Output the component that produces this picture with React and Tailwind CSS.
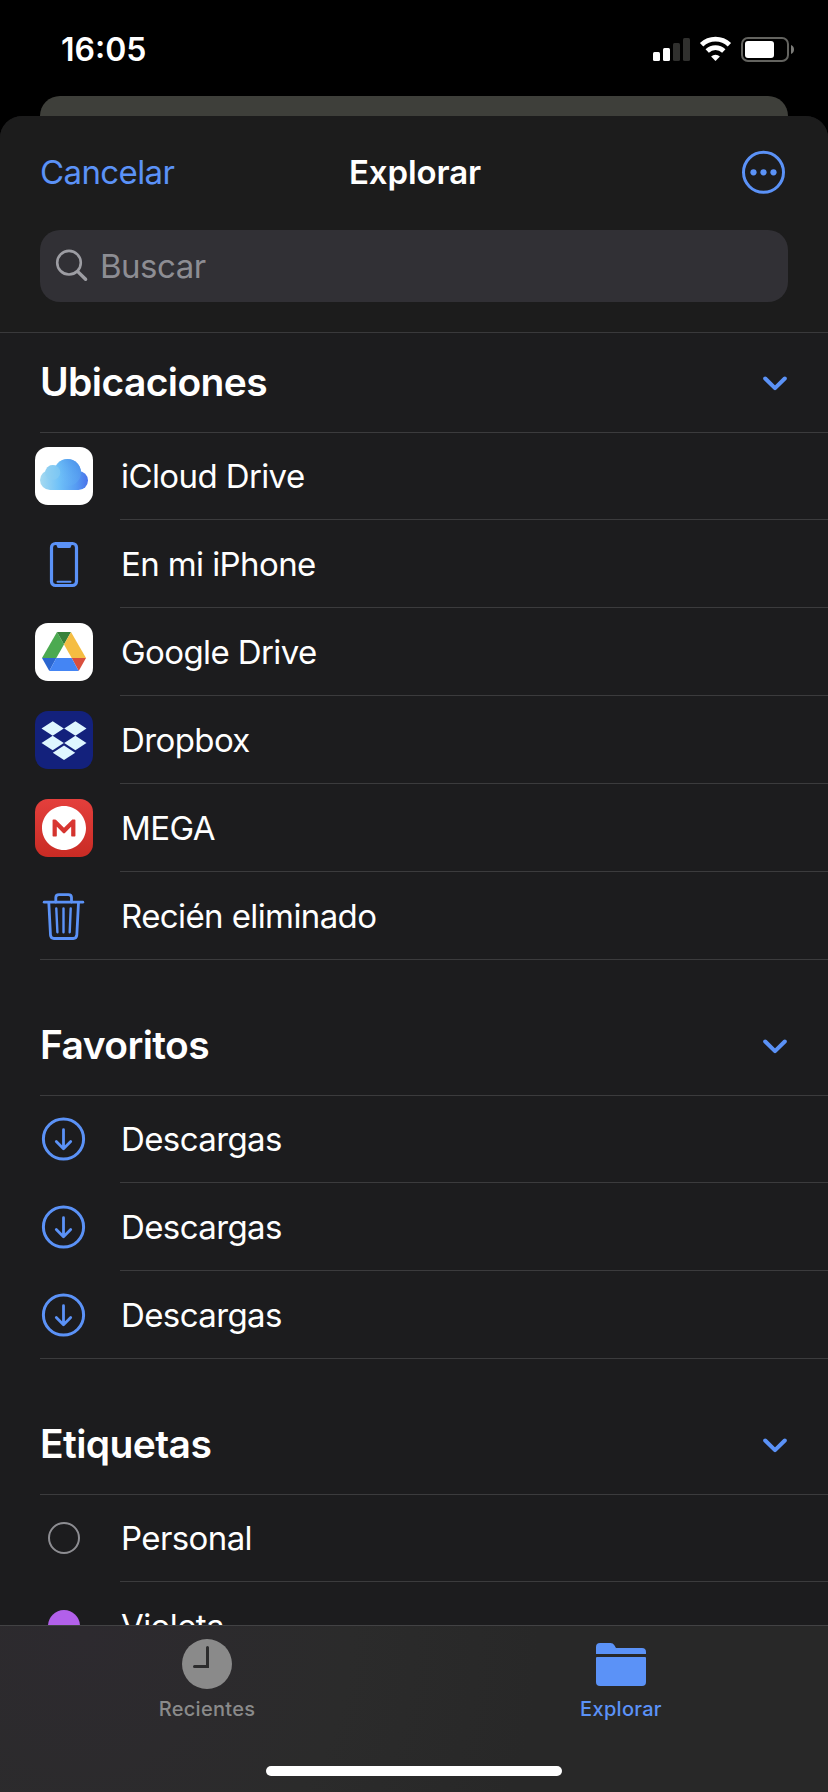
import { SiMega } from "react-icons/si";

function StatusBar() {
  return (
    <div className="flex h-24 shrink-0 items-start justify-between pt-[29px] pr-[33px] pl-[61px]">
      <p className="pt-px text-[32px] leading-10 font-semibold text-white">
        16:05
      </p>
      <div className="flex items-start gap-[9px] pt-[7px]">
        <svg width="37" height="26" viewBox="0 0 37 26">
          <rect x="0" y="16" width="7" height="9" rx="1.5" fill="#fff" />
          <rect x="10" y="12" width="7" height="13" rx="1.5" fill="#fff" />
          <rect x="20" y="7" width="7" height="18" rx="1.5" fill="#30302e" />
          <rect x="30" y="2" width="7" height="23" rx="1.5" fill="#30302e" />
        </svg>
        <svg width="33" height="26" viewBox="0 0 33 26" fill="none" stroke="#fff">
          <path d="M2.6 8.7A20 20 0 0 1 30.4 8.7" strokeWidth="4.8" />
          <path d="M8.2 14.9A12 12 0 0 1 24.8 14.9" strokeWidth="4.8" />
          <path
            d="M16.5 25L12.1 20.4A6.6 6.6 0 0 1 20.9 20.4Z"
            fill="#fff"
            stroke="none"
          />
        </svg>
        <svg width="54" height="26" viewBox="0 0 54 26">
          <rect
            x="1"
            y="2"
            width="46"
            height="23"
            rx="6"
            fill="none"
            stroke="#63635f"
            strokeWidth="2"
          />
          <rect x="4" y="5" width="29" height="17" rx="3" fill="#fff" />
          <path d="M50 9c2 .5 3 2.5 3 4.5s-1 4-3 4.5z" fill="#7b7b78" />
        </svg>
      </div>
    </div>
  );
}

function MoreIcon() {
  return (
    <svg width="44" height="44" viewBox="0 0 44 44" fill="#5b92f7">
      <circle
        cx="22.5"
        cy="22.3"
        r="20"
        fill="none"
        stroke="#5b92f7"
        strokeWidth="3"
      />
      <circle cx="12.5" cy="22.3" r="3.1" />
      <circle cx="22.5" cy="22.3" r="3.1" />
      <circle cx="32.5" cy="22.3" r="3.1" />
    </svg>
  );
}

function SearchIcon() {
  return (
    <svg width="34" height="34" viewBox="0 0 34 34" fill="none" stroke="#9d9da3">
      <circle cx="14" cy="13.7" r="11.8" strokeWidth="2.6" />
      <path d="M22.8 22.6L30.6 30.3" strokeWidth="3.4" strokeLinecap="round" />
    </svg>
  );
}

function ChevronIcon() {
  return (
    <svg
      className="mt-[2px]"
      width="24"
      height="15"
      viewBox="0 0 24 15"
      fill="none"
      stroke="#5b92f7"
      strokeWidth="4"
      strokeLinecap="round"
      strokeLinejoin="round"
    >
      <path d="M2.2 2.5L12 12.2L21.8 2.5" />
    </svg>
  );
}

function ICloudIcon() {
  return (
    <svg width="58" height="58" viewBox="0 0 58 58">
      <defs>
        <linearGradient
          id="cloud"
          x1="5"
          y1="0"
          x2="53"
          y2="0"
          gradientUnits="userSpaceOnUse"
        >
          <stop offset="0" stopColor="#a6daf0" />
          <stop offset="0.4" stopColor="#6fc1f8" />
          <stop offset="0.75" stopColor="#569cf2" />
          <stop offset="1" stopColor="#4a73ea" />
        </linearGradient>
        <linearGradient id="cloudTop" x1="0" y1="1" x2="1" y2="0">
          <stop offset="0.2" stopColor="#6fc4f8" stopOpacity="0" />
          <stop offset="1" stopColor="#468be8" />
        </linearGradient>
      </defs>
      <rect width="58" height="58" rx="13" fill="#fff" />
      <g fill="url(#cloud)">
        <circle cx="17.8" cy="25.5" r="7.5" />
        <circle cx="15" cy="33" r="10" />
        <circle cx="32.5" cy="25.5" r="13.5" />
        <circle cx="43.5" cy="33.5" r="9.5" />
        <rect x="15" y="28" width="28.5" height="15" />
      </g>
      <circle cx="32.5" cy="25.5" r="13.5" fill="url(#cloudTop)" />
      <circle cx="17.8" cy="25.5" r="7.5" fill="#8ccdf0" opacity="0.5" />
    </svg>
  );
}

function PhoneIcon() {
  return (
    <svg width="58" height="58" viewBox="0 0 58 58">
      <rect
        x="16.5"
        y="8.5"
        width="25"
        height="42"
        rx="4"
        fill="none"
        stroke="#5b92f7"
        strokeWidth="3.2"
      />
      <path
        d="M21 9h16l-1 2.5q-.2 1.5-1.7 1.5H23.7q-1.5 0-1.7-1.5z"
        fill="#5b92f7"
      />
      <path
        d="M22.5 46.7h13"
        stroke="#5b92f7"
        strokeWidth="2"
        strokeLinecap="round"
      />
    </svg>
  );
}

function GoogleDriveIcon() {
  return (
    <svg width="58" height="58" viewBox="0 0 58 58">
      <rect width="58" height="58" rx="13" fill="#fff" />
      <path d="M22 9L7 35H21.3L29 21.5Z" fill="#4caa51" />
      <path d="M22 9H36L29 21.5Z" fill="#37823a" />
      <path d="M36 9L51 35H36.7L29 21.5Z" fill="#f5bd42" />
      <path d="M36.7 35H51L43.7 48Z" fill="#d94f3d" />
      <path d="M7 35H21.3L14.3 48Z" fill="#2b66d0" />
      <path d="M21.3 35H36.7L43.7 48H14.3Z" fill="#4485f4" />
    </svg>
  );
}

function DropboxIcon() {
  return (
    <svg width="58" height="58" viewBox="0 0 58 58">
      <rect width="58" height="58" rx="13" fill="#13217c" />
      <g fill="#def6ff">
        <path d="M6.5 17.5L17.7 10.3L28.8 17.5L17.7 24.7Z" />
        <path d="M29.2 17.5L40.4 10.3L51.5 17.5L40.4 24.7Z" />
        <path d="M6.5 32L17.7 24.8L28.8 32L17.7 39.2Z" />
        <path d="M29.2 32L40.4 24.8L51.5 32L40.4 39.2Z" />
        <path d="M17.8 41.7L29 34.5L40.2 41.7L29 48.9Z" />
      </g>
    </svg>
  );
}

function MegaIcon() {
  return (
    <div className="flex size-[58px] items-center justify-center rounded-[13px] bg-linear-to-b from-[#e43f3c] to-[#c92b24]">
      <SiMega className="size-11 text-white" />
    </div>
  );
}

function TrashIcon() {
  return (
    <svg
      width="58"
      height="58"
      viewBox="0 0 58 58"
      fill="none"
      stroke="#5b92f7"
      strokeWidth="2.8"
      strokeLinecap="round"
      strokeLinejoin="round"
    >
      <path d="M9.2 15.2H47.8" />
      <path d="M20.8 15V10.5Q20.8 7.6 24 7.6H33.3Q36.5 7.6 36.5 10.5V15" />
      <path d="M13.8 15.5L15.5 48.2Q15.8 51.5 19 51.5H38.3Q41.5 51.5 41.8 48.2L43.5 15.5" />
      <path
        d="M21.3 21.5L22.4 45.2M28.5 21.5V45.2M35.7 21.5L34.7 45.2"
        strokeWidth="2.4"
      />
    </svg>
  );
}

function DownloadIcon() {
  return (
    <svg
      width="58"
      height="58"
      viewBox="0 0 58 58"
      fill="none"
      stroke="#5b92f7"
      strokeWidth="3"
      strokeLinecap="round"
      strokeLinejoin="round"
    >
      <circle cx="28.5" cy="29" r="20.1" />
      <path
        d="M28.5 19.7V38.5M21.3 31.5L28.5 38.7L35.7 31.5"
        strokeWidth="2.8"
      />
    </svg>
  );
}

function TagIcon({ className }) {
  return <div className={`size-8 rounded-full ${className}`} />;
}

const sections = [
  {
    title: "Ubicaciones",
    items: [
      { label: "iCloud Drive", icon: <ICloudIcon /> },
      { label: "En mi iPhone", icon: <PhoneIcon /> },
      { label: "Google Drive", icon: <GoogleDriveIcon /> },
      { label: "Dropbox", icon: <DropboxIcon /> },
      { label: "MEGA", icon: <MegaIcon /> },
      { label: "Recién eliminado", icon: <TrashIcon /> },
    ],
  },
  {
    title: "Favoritos",
    items: [
      { label: "Descargas", icon: <DownloadIcon /> },
      { label: "Descargas", icon: <DownloadIcon /> },
      { label: "Descargas", icon: <DownloadIcon /> },
    ],
  },
  {
    title: "Etiquetas",
    items: [
      {
        label: "Personal",
        icon: <TagIcon className="border-2 border-[#8d8d92]" />,
      },
      { label: "Violeta", icon: <TagIcon className="bg-[#b260ea]" /> },
    ],
  },
];

function Section({ title, items }) {
  return (
    <section className="mb-9">
      <div className="ml-10 flex h-[100px] items-center justify-between border-b border-[#3b3b3d] pr-[41px]">
        <h2 className="pb-[2px] text-[39px] leading-none font-semibold tracking-[-0.6px] text-white">
          {title}
        </h2>
        <ChevronIcon />
      </div>
      <ul>
        {items.map((item, index) => (
          <li
            key={index}
            className="group ml-10 flex h-22 first:h-[87px] last:border-b last:border-[#3b3b3d]"
          >
            <div className="flex w-20 shrink-0 items-center group-first:pb-px">
              <div className="-ml-[5px] flex w-[58px] justify-center">
                {item.icon}
              </div>
            </div>
            <p className="flex grow items-center border-b border-[#3b3b3d] pt-[2px] pl-px text-[33px] tracking-[-0.6px] text-white group-last:border-b-0">
              {item.label}
            </p>
          </li>
        ))}
      </ul>
    </section>
  );
}

function TabBar() {
  return (
    <nav className="h-[167px] shrink-0 border-t border-[#424244] bg-[#282828] bg-[radial-gradient(circle_at_10%_5%,#2d2a2f_0%,#2b2b2b_35%,#282828_60%)]">
      <div className="grid h-[140px] grid-cols-2">
        <div className="flex flex-col items-center pt-[13px] text-[#8a8a8a]">
          <svg width="50" height="50" viewBox="0 0 50 50">
            <circle cx="25" cy="25" r="25" fill="currentColor" />
            <path
              d="M25.5 8.5V27.5H12.5"
              fill="none"
              stroke="#2c2c2d"
              strokeWidth="3"
              strokeLinecap="round"
            />
          </svg>
          <p className="mt-[10px] text-[20px] leading-5 font-medium tracking-[0.3px]">
            Recientes
          </p>
        </div>
        <div className="flex flex-col items-center pt-[13px] text-[#5b92f7]">
          <svg width="50" height="50" viewBox="0 0 50 50" fill="currentColor">
            <path d="M0 15V8Q0 4 4 4H14.5Q17 4 18.2 6L20 9H46Q50 9 50 13V15Z" />
            <path d="M0 19Q0 18 1 18H49Q50 18 50 19V43Q50 47 46 47H4Q0 47 0 43Z" />
          </svg>
          <p className="mt-[10px] text-[20px] leading-5 font-medium tracking-[0.3px]">
            Explorar
          </p>
        </div>
      </div>
      <div className="mx-auto h-[10px] w-[296px] rounded-full bg-white" />
    </nav>
  );
}

function App() {
  return (
    <div className="flex h-[1792px] w-[828px] flex-col overflow-hidden bg-black font-['Inter','Liberation_Sans',sans-serif]">
      <StatusBar />
      <div className="mx-10 h-5 shrink-0 rounded-t-[20px] bg-[#3e3f3a]" />
      <div className="flex min-h-0 grow flex-col overflow-hidden rounded-t-[22px] bg-[#1c1c1e]">
        <header className="shrink-0 border-b border-[#39393b] bg-[#1c1c1c] px-10 pb-[30px]">
          <div className="grid h-28 grid-cols-3 items-center text-[33px]">
            <p className="pt-px tracking-[-0.6px] text-[#5b92f7]">Cancelar</p>
            <h1 className="pt-px pl-[2px] text-center font-semibold tracking-[-0.1px] text-white">
              Explorar
            </h1>
            <div className="flex justify-end pr-[3px]">
              <MoreIcon />
            </div>
          </div>
          <div className="mt-[2px] flex h-18 items-center rounded-[20px] bg-[#313035] pl-[15px]">
            <SearchIcon />
            <p className="pt-[2px] pl-[11px] text-[33px] tracking-[-0.5px] text-[#8d8d93]">
              Buscar
            </p>
          </div>
        </header>
        <main className="min-h-0 grow overflow-hidden">
          {sections.map((section) => (
            <Section key={section.title} {...section} />
          ))}
        </main>
        <TabBar />
      </div>
    </div>
  );
}

export default App;
